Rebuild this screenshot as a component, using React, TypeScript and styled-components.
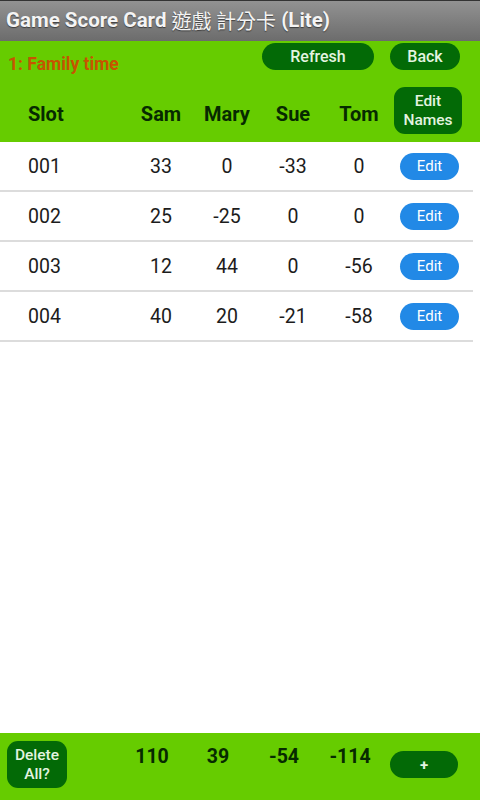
import React from 'react';
import styled, { createGlobalStyle } from 'styled-components';

const GlobalStyle = createGlobalStyle`
  html, body {
    margin: 0;
    padding: 0;
    background: #ffffff;
    font-family: Roboto, "Noto Sans", "Noto Sans CJK TC", sans-serif;
  }
  #root {
    height: 800px;
  }
`;

const GREEN = '#66cc00';
const DARK_GREEN = '#036a06';

const Screen = styled.div`
  display: flex;
  flex-direction: column;
  height: 800px;
  width: 480px;
  overflow: hidden;
`;

const TitleBar = styled.div`
  height: 41px;
  box-sizing: border-box;
  border-top: 1px solid #333;
  background: linear-gradient(#929292, #6c6c6c);
  display: flex;
  align-items: center;
  padding: 0 0 2px 6px;
  color: #f4f4f4;
  font-size: 20.5px;
  font-weight: bold;
  text-shadow: 0 1px 1px rgba(0, 0, 0, 0.5);
  white-space: nowrap;
`;

const CJK = styled.span`
  font-family: "Noto Sans CJK TC", sans-serif;
  font-weight: normal;
  font-size: 20px;
`;

const TopPanel = styled.div`
  background: ${GREEN};
  padding: 2px 0 8px;
`;

const ActionRow = styled.div`
  display: flex;
  align-items: flex-start;
  height: 27px;
`;

const GameName = styled.div`
  flex: 1;
  padding: 11px 0 0 8px;
  color: #c65400;
  font-size: 17.5px;
  font-weight: bold;
`;

const PillButton = styled.button<{ $width: number; $gap?: number }>`
  width: ${p => p.$width}px;
  height: 27px;
  margin-right: ${p => p.$gap ?? 0}px;
  border: none;
  border-radius: 14px;
  background: ${DARK_GREEN};
  color: #e4f4e0;
  font-family: Roboto, sans-serif;
  font-size: 16px;
  font-weight: 500;
  padding: 0;
`;

const Cols = styled.div`
  display: grid;
  grid-template-columns: 128px 66px 66px 66px 66px 1fr;
  align-items: center;
`;

const HeaderRow = styled(Cols)`
  margin-top: 17px;
  height: 47px;
  color: #062a00;
  font-size: 20px;
  font-weight: bold;
`;

const SlotCell = styled.div`
  padding-left: 28px;
`;

const NumCell = styled.div`
  text-align: center;
`;

const HeadCell = styled(NumCell)<{ $slot?: boolean }>`
  padding-top: 6px;
  padding-left: ${p => (p.$slot ? 28 : 0)}px;
  text-align: ${p => (p.$slot ? 'left' : 'center')};
`;

const NamesButton = styled.button`
  margin-left: 2px;
  width: 68px;
  height: 47px;
  border: none;
  border-radius: 11px;
  background: ${DARK_GREEN};
  color: #e4f4e0;
  font-family: Roboto, sans-serif;
  font-size: 15.5px;
  font-weight: 500;
  line-height: 19px;
  padding: 0;
`;

const List = styled.div`
  flex: 1;
  width: 473px;
`;

const ScoreRow = styled(Cols)`
  height: 48px;
  border-bottom: 2px solid #dcdcdc;
  color: #1c1c1c;
  font-size: 19.5px;
`;

const EditButton = styled.button`
  margin-left: 8px;
  width: 59px;
  height: 27px;
  border: none;
  border-radius: 14px;
  background: #2289e6;
  color: #ffffff;
  font-family: Roboto, sans-serif;
  font-size: 15px;
  padding: 0;
`;

const Footer = styled.div`
  height: 67px;
  background: ${GREEN};
  display: grid;
  grid-template-columns: 119px 66px 66px 66px 66px 1fr;
  align-items: start;
  padding-top: 8px;
  box-sizing: border-box;
`;

const DeleteButton = styled.button`
  margin-left: 7px;
  width: 60px;
  height: 47px;
  border: none;
  border-radius: 11px;
  background: ${DARK_GREEN};
  color: #e4f4e0;
  font-family: Roboto, sans-serif;
  font-size: 15.5px;
  font-weight: 500;
  line-height: 19px;
  padding: 0;
`;

const Total = styled.div`
  margin-top: 4px;
  text-align: center;
  line-height: 24px;
  color: #062a00;
  font-size: 19.5px;
  font-weight: bold;
`;

const AddButton = styled(PillButton)`
  margin-top: 10px;
  margin-left: 7px;
  font-size: 15px;
  font-weight: bold;
`;

const players = ['Sam', 'Mary', 'Sue', 'Tom'];

const rounds = [
  { slot: '001', scores: [33, 0, -33, 0] },
  { slot: '002', scores: [25, -25, 0, 0] },
  { slot: '003', scores: [12, 44, 0, -56] },
  { slot: '004', scores: [40, 20, -21, -58] },
];

const totals = players.map((_, i) => rounds.reduce((sum, r) => sum + r.scores[i], 0));

export default function App() {
  return (
    <Screen>
      <GlobalStyle />
      <TitleBar>
        Game Score Card&nbsp;<CJK>遊戲 計分卡</CJK>&nbsp;(Lite)
      </TitleBar>
      <TopPanel>
        <ActionRow>
          <GameName>1: Family time</GameName>
          <PillButton $width={112} $gap={16}>Refresh</PillButton>
          <PillButton $width={70} $gap={20}>Back</PillButton>
        </ActionRow>
        <HeaderRow>
          <HeadCell $slot>Slot</HeadCell>
          {players.map(name => (
            <HeadCell key={name}>{name}</HeadCell>
          ))}
          <div>
            <NamesButton>
              Edit
              <br />
              Names
            </NamesButton>
          </div>
        </HeaderRow>
      </TopPanel>
      <List>
        {rounds.map(r => (
          <ScoreRow key={r.slot}>
            <SlotCell>{r.slot}</SlotCell>
            {r.scores.map((s, i) => (
              <NumCell key={i}>{s}</NumCell>
            ))}
            <div>
              <EditButton>Edit</EditButton>
            </div>
          </ScoreRow>
        ))}
      </List>
      <Footer>
        <DeleteButton>
          Delete
          <br />
          All?
        </DeleteButton>
        {totals.map((t, i) => (
          <Total key={i}>{t}</Total>
        ))}
        <div>
          <AddButton $width={68}>+</AddButton>
        </div>
      </Footer>
    </Screen>
  );
}
